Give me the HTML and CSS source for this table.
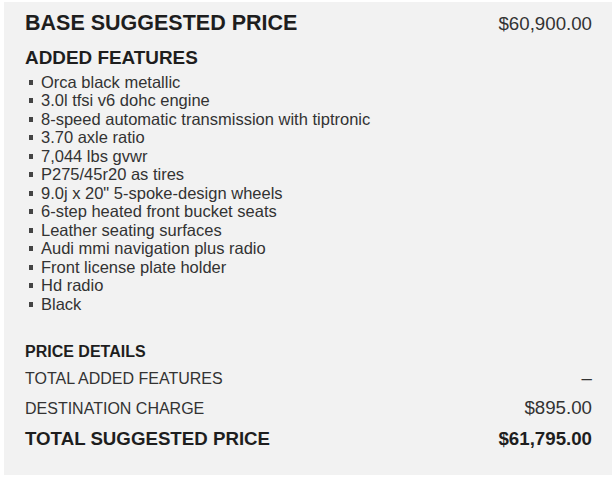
FILE: index.html
```html
<!DOCTYPE html>
<html lang="en">
<head>
<meta charset="utf-8">
<title>Price Summary</title>
<link rel="stylesheet" href="styles.css">
</head>
<body>
<section class="panel">
  <div class="row head-row">
    <h1 class="title">BASE SUGGESTED PRICE</h1>
    <span class="value">$60,900.00</span>
  </div>
  <h2 class="subtitle">ADDED FEATURES</h2>
  <ul class="features">
    <li>Orca black metallic</li>
    <li>3.0l tfsi v6 dohc engine</li>
    <li>8-speed automatic transmission with tiptronic</li>
    <li>3.70 axle ratio</li>
    <li>7,044 lbs gvwr</li>
    <li>P275/45r20 as tires</li>
    <li>9.0j x 20" 5-spoke-design wheels</li>
    <li>6-step heated front bucket seats</li>
    <li>Leather seating surfaces</li>
    <li>Audi mmi navigation plus radio</li>
    <li>Front license plate holder</li>
    <li>Hd radio</li>
    <li>Black</li>
  </ul>
  <h3 class="details-title">PRICE DETAILS</h3>
  <div class="row detail">
    <span class="label">TOTAL ADDED FEATURES</span>
    <span class="value">–</span>
  </div>
  <div class="row detail">
    <span class="label">DESTINATION CHARGE</span>
    <span class="value">$895.00</span>
  </div>
  <div class="row detail total">
    <span class="label">TOTAL SUGGESTED PRICE</span>
    <span class="value">$61,795.00</span>
  </div>
</section>
</body>
</html>
```

FILE: styles.css
```css
* { box-sizing: border-box; }

html, body {
  margin: 0;
  padding: 0;
  background: #ffffff;
}

body {
  font-family: "Liberation Sans", Arial, sans-serif;
  color: #333333;
}

.panel {
  margin: 2px 4px 0 4px;
  height: 473px;
  background: #f2f2f2;
  padding: 8px 20px 0 21px;
}

.row {
  display: flex;
  justify-content: space-between;
  align-items: baseline;
}

.title {
  margin: 0;
  font-size: 21.5px;
  line-height: 26px;
  font-weight: bold;
  color: #1e1e1e;
}

.head-row .value {
  font-size: 18.7px;
  line-height: 26px;
  color: #333333;
}

.subtitle {
  margin: 10px 0 0 0;
  font-size: 18.9px;
  line-height: 22px;
  font-weight: bold;
  color: #1e1e1e;
}

.features {
  list-style: none;
  margin: 3.5px 0 0 0;
  padding: 0;
  font-size: 16.5px;
  line-height: 18.5px;
  color: #333333;
}

.features li::before {
  content: "";
  display: inline-block;
  width: 4px;
  height: 5px;
  background: #444444;
  vertical-align: 3px;
  margin: 0 8px 0 4px;
}

.details-title {
  margin: 28.6px 0 0 0;
  font-size: 16px;
  line-height: 20px;
  font-weight: bold;
  color: #1e1e1e;
}

.detail .label {
  font-size: 16px;
  line-height: 30px;
  color: #333333;
}

.detail .value {
  font-size: 18.7px;
  line-height: 28px;
  color: #333333;
}

.details-title + .detail { margin-top: 2.6px; }

.total .label {
  font-size: 18.7px;
  font-weight: bold;
  color: #1e1e1e;
}

.total .value {
  font-weight: bold;
  color: #1e1e1e;
}
```
